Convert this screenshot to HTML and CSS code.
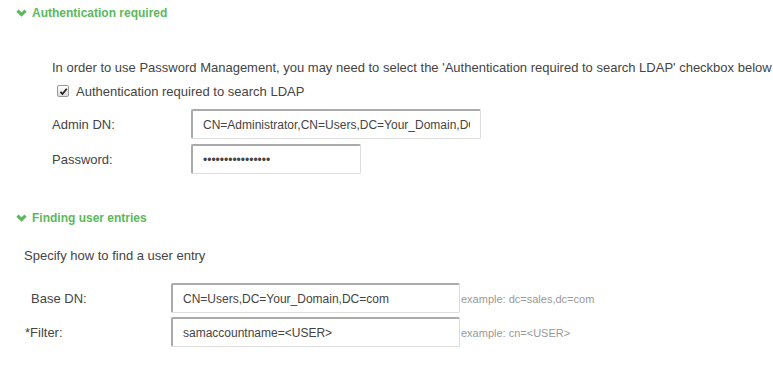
FILE: index.html
```html
<!DOCTYPE html>
<html lang="en">
<head>
  <meta charset="UTF-8">
  <title>LDAP Settings</title>
  <link rel="stylesheet" href="styles.css">
</head>
<body>

  <div class="section-title first">
    <svg class="chevron" width="11" height="8" viewBox="0 0 11 8"><polyline points="1.5,1.6 5.5,5.6 9.5,1.6" fill="none" stroke="#5cb85c" stroke-width="3.2"/></svg>
    Authentication required
  </div>

  <div class="auth-block">
    <p class="note">In order to use Password Management, you may need to select the 'Authentication required to search LDAP' checkbox below</p>
    <div class="check-row">
      <span class="checkbox">
        <svg width="9" height="9" viewBox="0 0 9 9"><polyline points="1.5,4.8 3.5,7 7.8,1.8" fill="none" stroke="#222" stroke-width="1.8"/></svg>
      </span>
      Authentication required to search LDAP
    </div>
    <div class="field-row">
      <label class="field-label">Admin DN:</label>
      <input class="field wide" type="text" value="CN=Administrator,CN=Users,DC=Your_Domain,DC=com">
    </div>
    <div class="field-row">
      <label class="field-label">Password:</label>
      <input class="field short" type="password" value="passwordpassword">
    </div>
  </div>

  <div class="section-title second">
    <svg class="chevron" width="11" height="8" viewBox="0 0 11 8"><polyline points="1.5,1.6 5.5,5.6 9.5,1.6" fill="none" stroke="#5cb85c" stroke-width="3.2"/></svg>
    Finding user entries
  </div>

  <div class="user-block">
    <p class="note">Specify how to find a user entry</p>
    <div class="field-row">
      <label class="field-label">Base DN:</label>
      <input class="field base" type="text" value="CN=Users,DC=Your_Domain,DC=com">
      <span class="example">example: dc=sales,dc=com</span>
    </div>
    <div class="field-row">
      <label class="field-label"><span class="req">*</span>Filter:</label>
      <input class="field base" type="text" value="samaccountname=&lt;USER&gt;">
      <span class="example">example: cn=&lt;USER&gt;</span>
    </div>
  </div>

</body>
</html>
```

FILE: styles.css
```css
body {
  margin: 0;
  font-family: "Liberation Sans", Arial, sans-serif;
  font-size: 13px;
  color: #444;
  background-color: #fff;
}

.section-title {
  display: flex;
  align-items: center;
  gap: 5px;
  padding-left: 16px;
  height: 16px;
  line-height: 16px;
  font-size: 12px;
  font-weight: bold;
  color: #5cb85c;
}

.section-title.first {
  margin-top: 5px;
}

.section-title.second {
  margin-top: 36px;
}

.chevron {
  display: block;
}

.note {
  margin: 0;
  height: 18px;
  line-height: 18px;
}

.auth-block {
  padding-left: 52px;
  margin-top: 38px;
}

.check-row {
  display: flex;
  align-items: center;
  gap: 7px;
  height: 18px;
  margin-top: 5px;
  padding-left: 5px;
}

.checkbox {
  display: flex;
  align-items: center;
  justify-content: center;
  width: 10px;
  height: 10px;
  border: 1px solid #999;
  border-radius: 2px;
  background: linear-gradient(#fff, #ddd);
}

.field-row {
  display: flex;
  align-items: center;
  margin-top: 5px;
}

.auth-block .check-row + .field-row {
  margin-top: 9px;
}

.auth-block .field-label {
  width: 139px;
}

.field {
  box-sizing: border-box;
  height: 30px;
  padding: 0 10px;
  font-family: "Liberation Sans", Arial, sans-serif;
  font-size: 12px;
  color: #444;
  border: 1px solid #ddd;
  border-top: 2px solid #aaa;
  border-left: 2px solid #aaa;
  border-radius: 2px;
  outline: none;
}

.field.wide {
  width: 290px;
}

.field.short {
  width: 170px;
}

.field.base {
  width: 289px;
}

.user-block {
  margin-top: 21px;
  padding-left: 24px;
}

.user-block .note + .field-row {
  margin-top: 18px;
}

.user-block .field-row + .field-row {
  margin-top: 4px;
}

.user-block .field-label {
  width: 147px;
  padding-left: 7px;
  box-sizing: border-box;
}

.req {
  margin-left: -6px;
}

.example {
  align-self: flex-end;
  margin-bottom: 8px;
  padding-left: 1px;
  font-size: 11px;
  color: #999;
}
```
